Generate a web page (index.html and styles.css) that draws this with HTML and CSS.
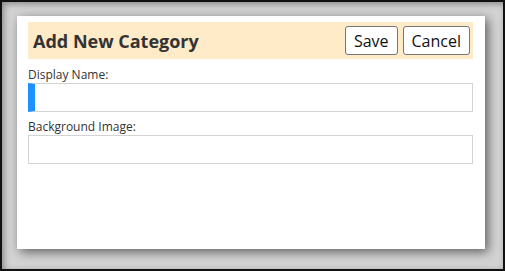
FILE: index.html
```html
<!DOCTYPE html>
<html lang="en">
<head>
    <meta charset="UTF-8">
    <title>Add New Category</title>
    <link rel="stylesheet" href="styles.css">
</head>
<body>
    <div class="frame">
        <div class="dialog">
            <div class="dialog-header">
                <h1 class="dialog-title">Add New Category</h1>
                <div class="actions">
                    <button type="button" class="btn">Save</button>
                    <button type="button" class="btn">Cancel</button>
                </div>
            </div>

            <label class="field-label" for="display_name">Display Name:</label>
            <input type="text" id="display_name" class="field-input is-active">

            <label class="field-label" for="background_image">Background Image:</label>
            <input type="text" id="background_image" class="field-input">
        </div>
    </div>
</body>
</html>
```

FILE: styles.css
```css
/* page */
html, body {
    margin: 0;
    height: 100%;
}

body {
    font-family: "Open Sans", "Noto Sans", sans-serif;
    color: #333;
}

/* outer frame with dark border */
.frame {
    box-sizing: border-box;
    height: 100%;
    border: 2px solid #111;
    background: #d3d3d3;
    box-shadow: inset 2px 2px 6px rgba(0, 0, 0, 0.35);
    padding: 14px 18px 0 15px;
}

/* dialog card */
.dialog {
    box-sizing: border-box;
    height: 233px;
    background: #fff;
    padding: 6px 12px 0 11px;
    box-shadow: 3px 3px 10px rgba(0, 0, 0, 0.55);
}

.dialog-header {
    display: flex;
    align-items: center;
    justify-content: space-between;
    height: 37px;
    padding: 0 3px 0 5px;
    background: #ffebc8;
}

.dialog-title {
    margin: 0;
    font-size: 18px;
    font-weight: bold;
    color: #333;
}

.actions {
    display: flex;
    gap: 5px;
}

.btn {
    height: 29px;
    padding: 0 8px;
    font-family: inherit;
    font-size: 16px;
    color: #111;
    background: #fff;
    border: 1px solid #767676;
    border-radius: 3px;
}

/* form fields */
.field-label {
    display: block;
    margin-top: 8px;
    font-size: 12px;
    line-height: 16px;
}

.field-input + .field-label {
    margin-top: 7px;
}

.field-input {
    display: block;
    box-sizing: border-box;
    width: 100%;
    height: 29px;
    margin: 0;
    border: 1px solid #d3d3d3;
    outline: none;
}

.field-input.is-active {
    border-left: 7px solid #1e90ff;
}
```
